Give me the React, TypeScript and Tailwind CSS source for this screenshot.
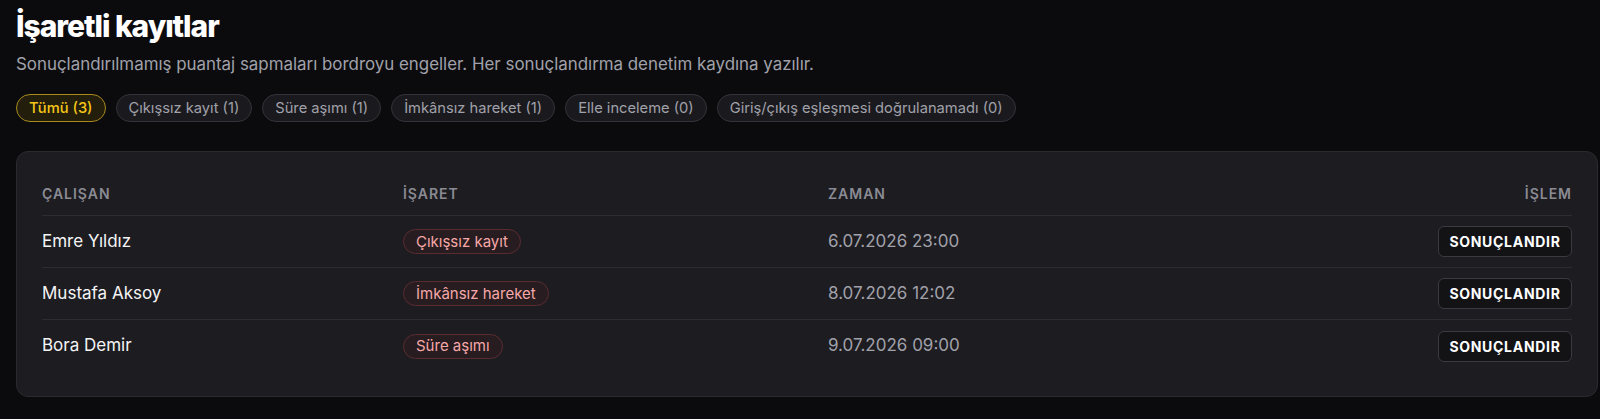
import React from "react";

const chips = [
  { label: "Tümü (3)", active: true },
  { label: "Çıkışsız kayıt (1)" },
  { label: "Süre aşımı (1)" },
  { label: "İmkânsız hareket (1)" },
  { label: "Elle inceleme (0)" },
  { label: "Giriş/çıkış eşleşmesi doğrulanamadı (0)" },
];

const rows = [
  { name: "Emre Yıldız", flag: "Çıkışsız kayıt", time: "6.07.2026 23:00" },
  { name: "Mustafa Aksoy", flag: "İmkânsız hareket", time: "8.07.2026 12:02" },
  { name: "Bora Demir", flag: "Süre aşımı", time: "9.07.2026 09:00" },
];

export default function App() {
  return (
    <div
      className="min-h-[419px] w-full bg-[#0b0b0d] pl-4 pr-[2px] pt-[7px] pb-6 text-white"
      style={{ fontFamily: "Inter, 'Noto Sans', sans-serif" }}
    >
      <h1 className="text-[30px] font-extrabold leading-[38px] tracking-[-0.035em] text-white">
        İşaretli kayıtlar
      </h1>
      <p className="mt-[6px] text-[16.9px] leading-[26px] text-[#a1a1aa]">
        Sonuçlandırılmamış puantaj sapmaları bordroyu engeller. Her sonuçlandırma denetim kaydına yazılır.
      </p>
      <div className="mt-[17px] flex gap-[10px]">
        {chips.map((c) => (
          <span
            key={c.label}
            className={
              c.active
                ? "flex h-[28px] items-center rounded-full border border-[#a8891c] bg-[#231e0c] px-3 text-[14.7px] font-medium text-[#f5c518]"
                : "flex h-[28px] items-center rounded-full border border-[#33333a] bg-[#1a1a1e] px-3 text-[14.7px] text-[#a1a1aa]"
            }
          >
            {c.label}
          </span>
        ))}
      </div>
      <div className="mt-[29px] rounded-xl border border-[#2a2a30] bg-[#1c1c21] px-[25px] pt-6 pb-6">
        <div className="grid grid-cols-[361px_425px_1fr_auto] items-center border-b border-[#2c2c32] pb-[11px] pt-[8px] text-[14px] font-semibold uppercase leading-5 tracking-[0.07em] text-[#8b8b93]">
          <div>ÇALIŞAN</div>
          <div>İŞARET</div>
          <div>ZAMAN</div>
          <div className="text-right">İŞLEM</div>
        </div>
        {rows.map((r, i) => (
          <div
            key={r.name}
            className={
              "grid h-[52px] grid-cols-[361px_425px_1fr_auto] items-center" +
              (i < rows.length - 1 ? " border-b border-[#2c2c32]" : "")
            }
          >
            <div className="text-[17px] text-[#f4f4f5]">{r.name}</div>
            <div>
              <span className="inline-flex h-[25px] items-center rounded-full border border-[#5a2c32] bg-[#271c20] px-3 text-[15px] text-[#f6a8a8]">
                {r.flag}
              </span>
            </div>
            <div className="text-[17px] text-[#a1a1aa]">{r.time}</div>
            <div className="flex justify-end">
              <button className="flex h-[31px] w-[134px] items-center justify-center rounded-md border border-[#3a3a41] bg-[#131316] text-[14px] font-bold tracking-[0.05em] text-white">
                SONUÇLANDIR
              </button>
            </div>
          </div>
        ))}
      </div>
    </div>
  );
}
